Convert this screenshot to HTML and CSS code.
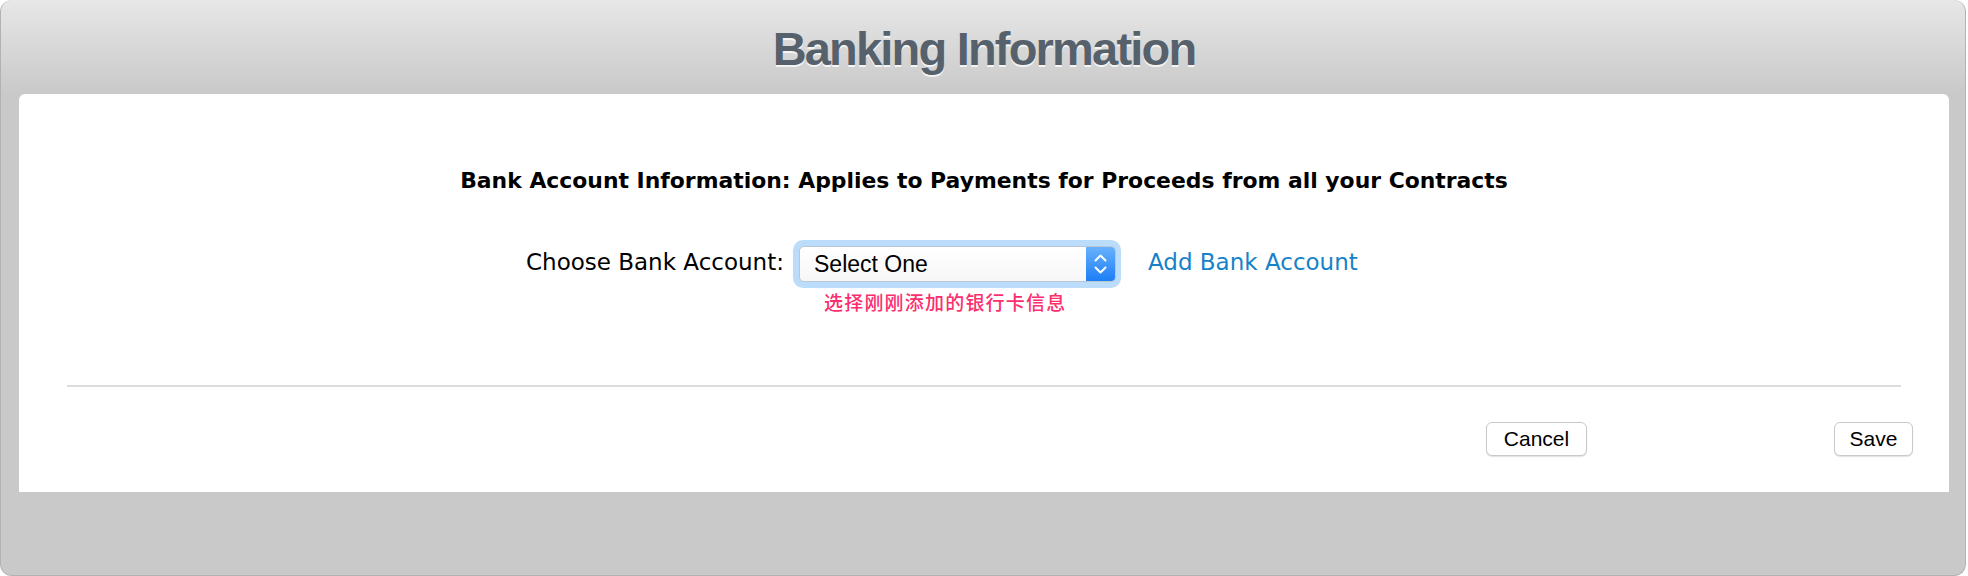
FILE: index.html
```
<!DOCTYPE html>
<html>
<head>
<meta charset="utf-8">
<link rel="stylesheet" href="styles.css">
</head>
<body>
<div class="frame">
  <h1 class="title">Banking Information</h1>
  <div class="panel">
    <h2 class="heading">Bank Account Information: Applies to Payments for Proceeds from all your Contracts</h2>
    <div class="row">
      <span class="label">Choose Bank Account:</span>
      <div class="field">
        <div class="ring">
          <div class="select">
            <span class="select-text">Select One</span>
            <span class="arrows">
              <svg width="29" height="36" viewBox="0 0 29 36">
                <path d="M9.5 14.5 L14.5 9.5 L19.5 14.5" fill="none" stroke="#fff" stroke-width="2" stroke-linecap="round" stroke-linejoin="round"/>
                <path d="M9.5 21.5 L14.5 26.5 L19.5 21.5" fill="none" stroke="#fff" stroke-width="2" stroke-linecap="round" stroke-linejoin="round"/>
              </svg>
            </span>
          </div>
        </div>
        <div class="hint">选择刚刚添加的银行卡信息</div>
      </div>
      <a class="link" href="#">Add Bank Account</a>
    </div>
    <div class="divider"></div>
    <div class="actions">
      <button class="btn btn-cancel">Cancel</button>
      <button class="btn btn-save">Save</button>
    </div>
  </div>
</div>
</body>
</html>
```
FILE: styles.css
```
html, body {
  margin: 0;
  padding: 0;
  background: #ffffff;
}
.frame {
  box-sizing: border-box;
  width: 1966px;
  height: 576px;
  border: 1px solid #b2b2b2;
  border-top: none;
  border-radius: 12px;
  background: linear-gradient(#e7e7e7 0px, #c9c9c9 94px, #c9c9c9 100%);
  padding: 0 16px 0 18px;
}
.title {
  box-sizing: border-box;
  height: 94px;
  margin: 0;
  padding-top: 25px;
  text-align: center;
  font-family: "Liberation Sans", Arial, sans-serif;
  font-weight: bold;
  font-size: 47px;
  line-height: 47px;
  letter-spacing: -1.8px;
  color: #56616c;
  text-shadow: 0 2px 0 #f4f4f4;
}
.panel {
  box-sizing: border-box;
  width: 1930px;
  height: 398px;
  background: #ffffff;
  border-radius: 6px 6px 0 0;
  padding-top: 75px;
}
.heading {
  margin: 0;
  text-align: center;
  font-family: "DejaVu Sans", Verdana, sans-serif;
  font-weight: bold;
  font-size: 21.9px;
  line-height: 24px;
  color: #000000;
}
.row {
  display: flex;
  align-items: flex-start;
  margin: 47px 0 0 507px;
}
.label {
  font-family: "DejaVu Sans", Verdana, sans-serif;
  font-size: 23px;
  line-height: 28px;
  margin-top: 8px;
  color: #000;
  width: 267px;
}
.field {
  display: flex;
  flex-direction: column;
}
.ring {
  box-sizing: border-box;
  width: 328px;
  height: 48px;
  padding: 6px 5px 6px 6px;
  background: #bcdcfb;
  border-radius: 10px;
}
.select {
  box-sizing: border-box;
  height: 36px;
  display: flex;
  align-items: center;
  justify-content: space-between;
  background: linear-gradient(#ffffff, #f7f7f7);
  border: 1px solid #b9c6d3;
  border-radius: 5px;
  overflow: hidden;
}
.select-text {
  padding-left: 14px;
  font-family: "Liberation Sans", Arial, sans-serif;
  font-size: 23px;
  color: #000;
}
.arrows {
  display: block;
  width: 29px;
  height: 36px;
  background: linear-gradient(#6ab3fc, #1a7cf6);
}
.arrows svg {
  display: block;
}
.hint {
  margin: 2px 0 0 31px;
  font-family: "Noto Sans CJK SC", sans-serif;
  font-size: 19px;
  line-height: 24px;
  letter-spacing: 1.2px;
  font-weight: 500;
  color: #fb2e6e;
}
.link {
  margin: 8px 0 0 27px;
  font-family: "DejaVu Sans", Verdana, sans-serif;
  font-size: 23px;
  line-height: 28px;
  color: #1782c9;
  text-decoration: none;
}
.divider {
  height: 2px;
  margin: 71px 48px 0 48px;
  background: #dcdcdc;
}
.actions {
  display: flex;
  justify-content: flex-end;
  gap: 247px;
  padding-right: 36px;
  margin-top: 35px;
}
.btn {
  box-sizing: border-box;
  height: 34px;
  padding: 0;
  background: #ffffff;
  border: 1px solid #c9c9c9;
  border-radius: 6px;
  box-shadow: 0 1px 1px rgba(0, 0, 0, 0.12);
  font-family: "Liberation Sans", Arial, sans-serif;
  font-size: 21px;
  color: #000;
}
.btn-cancel {
  width: 101px;
}
.btn-save {
  width: 79px;
}
```
